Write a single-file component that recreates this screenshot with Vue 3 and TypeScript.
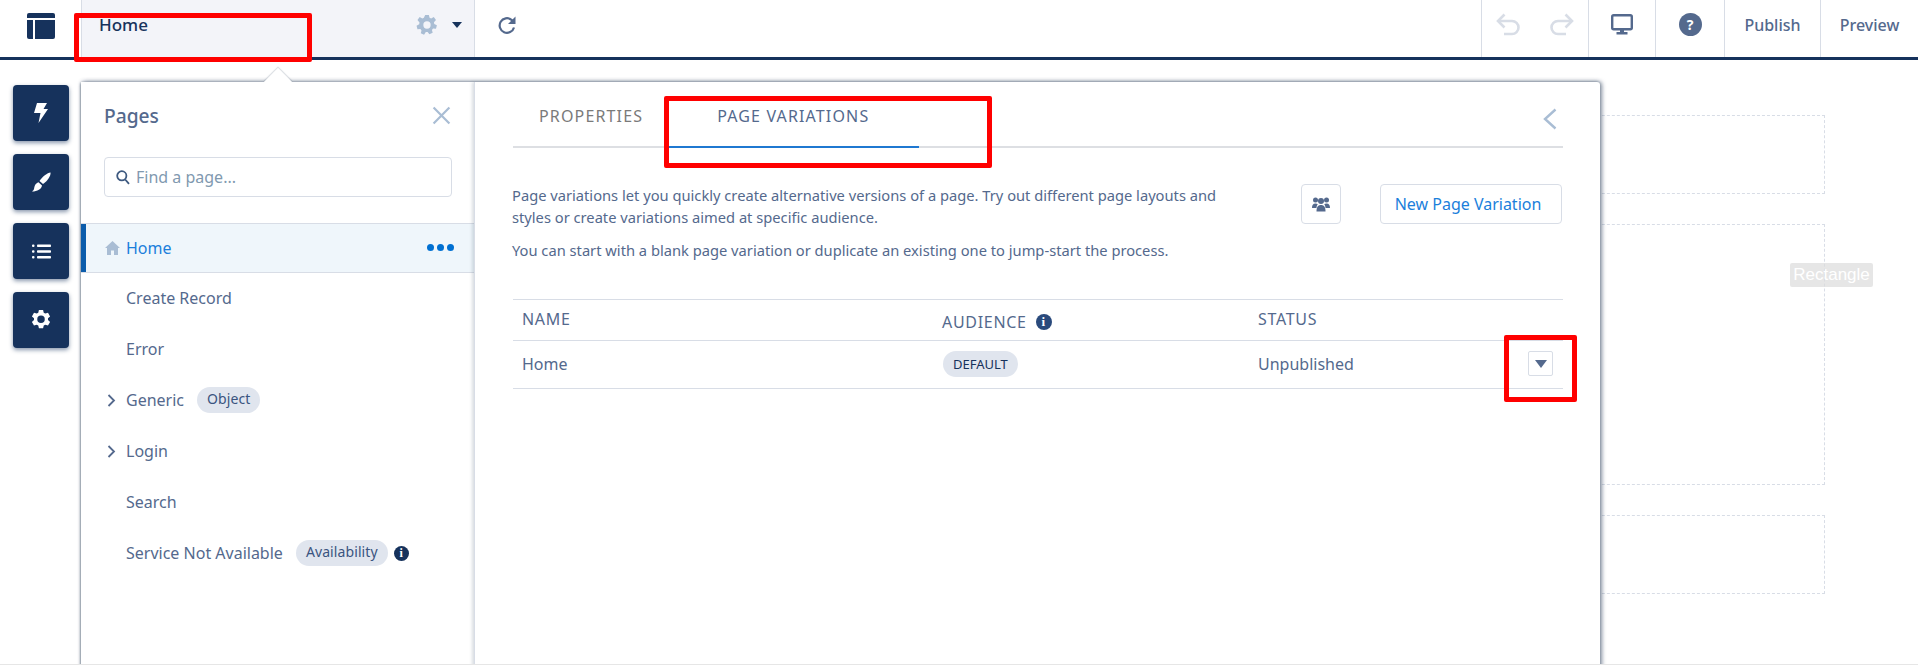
<script setup lang="ts">
interface PageRow { name: string; expandable?: boolean; badge?: string; info?: boolean }

const pages: PageRow[] = [
  { name: 'Create Record' },
  { name: 'Error' },
  { name: 'Generic', expandable: true, badge: 'Object' },
  { name: 'Login', expandable: true },
  { name: 'Search' },
  { name: 'Service Not Available', badge: 'Availability', info: true }
]
</script>

<template>
  <div class="root">
    <header class="topbar">
      <div class="logo-cell">
        <svg width="28" height="26" viewBox="0 0 28 26" fill="#16325c">
          <path d="M2 0h24a2 2 0 0 1 2 2v3H0V2a2 2 0 0 1 2-2z" />
          <path d="M0 7h6v19H2a2 2 0 0 1-2-2z" />
          <path d="M8 7h20v17a2 2 0 0 1-2 2H8z" />
        </svg>
      </div>
      <div class="home-tab">
        <span class="home-title">Home</span>
        <svg class="tab-gear" width="22" height="22" viewBox="0 0 24 24">
          <path fill="#a9bdd4" fill-rule="evenodd" d="M10 1h4l.8 3.100 1.700.8 2.900-1.600 2.400 3.300-2.200 2.300.3 1.900 2.900 1.400-1 3.900-3.200-.2-1.200 1.500.8 3.100-3.600 1.700-1.900-2.600h-2L8.800 22.700 5.200 21l.8-3.100-1.200-1.500-3.200.2-1-3.900 2.900-1.400.3-1.900L1.600 6.600 4 3.300l2.900 1.600 1.700-.8zM12 8a4 4 0 1 0 0 8 4 4 0 0 0 0-8z" />
        </svg>
        <svg class="tab-caret" width="10" height="6" viewBox="0 0 12 7"><path fill="#16325c" d="M0 0h12L6 7z" /></svg>
      </div>
      <div class="refresh-cell">
        <svg width="20" height="20" viewBox="0 0 20 20" fill="none" stroke="#54698d" stroke-width="2.200">
          <path d="M17 12.500A7.300 7.300 0 1 1 14.500 4.800L16.500 7" />
          <path d="M18.500 1.500v7.500H11z" fill="#54698d" stroke="none" />
        </svg>
      </div>
      <div class="spacer"></div>
      <div class="action-cell history">
        <svg width="25" height="23" viewBox="0 0 25 23" fill="none" stroke="#d8dde6" stroke-width="2.600">
          <path d="M8.500 1.500 2 8l6.500 6.500" />
          <path d="M2.500 8H16a6.500 6.500 0 0 1 0 13H8" />
        </svg>
        <svg width="25" height="23" viewBox="0 0 25 23" fill="none" stroke="#d8dde6" stroke-width="2.600">
          <path d="M16.500 1.500 23 8l-6.500 6.500" />
          <path d="M22.500 8H9a6.500 6.500 0 0 0 0 13h8" />
        </svg>
      </div>
      <div class="action-cell device">
        <svg width="22" height="22" viewBox="0 0 22 22">
          <rect x="1.200" y="1.200" width="19.600" height="14" rx="1.500" fill="none" stroke="#54698d" stroke-width="2.400" />
          <path fill="#54698d" d="M9 16h4v2h3.500v2.500h-11V18H9z" />
        </svg>
      </div>
      <div class="action-cell help">
        <span class="help-circle">?</span>
      </div>
      <div class="action-cell text publish">Publish</div>
      <div class="action-cell text preview">Preview</div>
    </header>

    <div class="stage">
      <nav class="rail">
        <button class="rail-btn">
          <svg width="14" height="20" viewBox="0 0 14 20" fill="#fff"><path d="M3 0h10L9.500 6H14L4.500 20l2-10H0z" /></svg>
        </button>
        <button class="rail-btn">
          <svg width="19" height="20" viewBox="0 0 19 20" fill="#fff"><path d="M18.500.5c.6 2.500-2.500 8-7.500 11.500L7.500 9C10 5 15.500.5 18.500.5z" /><path d="M6.500 10.200 10 13.500c-.5 3.500-4.500 6-10 6 2.800-1.800 1.800-3.800 3-6.300.7-1.500 2-2.500 3.500-3z" /></svg>
        </button>
        <button class="rail-btn">
          <svg width="19" height="15" viewBox="0 0 19 15" fill="#fff">
            <rect x="0" y="0.500" width="2.500" height="2.500" rx="1" /><rect x="5" y="0.500" width="14" height="2.500" rx=".8" />
            <rect x="0" y="6.200" width="2.500" height="2.500" rx="1" /><rect x="5" y="6.200" width="14" height="2.500" rx=".8" />
            <rect x="0" y="12" width="2.500" height="2.500" rx="1" /><rect x="5" y="12" width="14" height="2.500" rx=".8" />
          </svg>
        </button>
        <button class="rail-btn">
          <svg width="20" height="20" viewBox="0 0 24 24"><path fill="#fff" fill-rule="evenodd" d="M9.500 0h5l.8 3.300 1.800 1 3.300-1 2.500 4.400-2.500 2.300v2l2.500 2.300-2.500 4.400-3.300-1-1.800 1-.8 3.300h-5l-.8-3.300-1.800-1-3.300 1L1.100 14.300 3.600 12v-2L1.100 7.700l2.500-4.400 3.300 1 1.800-1zM12 6.500a4.500 4.500 0 1 0 0 9 4.500 4.500 0 0 0 0-9z" /></svg>
        </button>
      </nav>

      <div class="canvas">
        <div class="region r1"></div>
        <div class="region r2"><span class="region-label">Rectangle</span></div>
        <div class="region r3"></div>
      </div>

      <section class="popover">
        <span class="nub"></span>
        <aside class="pages">
          <div class="pages-head">
            <h2>Pages</h2>
            <svg width="19" height="19" viewBox="0 0 18 18" stroke="#a9bdd4" stroke-width="2.100"><path d="M1.500 1.500l15 15M16.500 1.500l-15 15" /></svg>
          </div>
          <div class="search">
            <svg width="14" height="15" viewBox="0 0 14 15" fill="none" stroke="#3e5a80" stroke-width="1.800"><circle cx="5.800" cy="5.800" r="4.600" /><path d="M9.200 9.500 13 13.800" /></svg>
            <span>Find a page...</span>
          </div>
          <div class="page-row selected">
            <svg class="house" width="15" height="14" viewBox="0 0 15 14" fill="#a9bdd4"><path d="M7.500 0 15 7h-2v7H9V9.500H6V14H2V7H0z" /></svg>
            <span class="page-name">Home</span>
            <span class="dots"><i></i><i></i><i></i></span>
          </div>
          <div v-for="page in pages" :key="page.name" class="page-row">
            <svg v-if="page.expandable" class="chev" width="9" height="13" viewBox="0 0 9 13" fill="none" stroke="#54698d" stroke-width="1.800"><path d="M1.500 1 7 6.500 1.500 12" /></svg>
            <span class="page-name">{{ page.name }}</span>
            <span v-if="page.badge" class="badge">{{ page.badge }}</span>
            <span v-if="page.info" class="info dark">i</span>
          </div>
        </aside>

        <div class="details">
          <div class="tabs">
            <span class="tab">PROPERTIES</span>
            <span class="tab active">PAGE VARIATIONS</span>
            <svg class="back" width="14" height="22" viewBox="0 0 14 22" fill="none" stroke="#a9bdd4" stroke-width="2.400"><path d="M12.500 1.500 2 11l10.500 9.500" /></svg>
          </div>
          <div class="intro">
            <div class="intro-text">
              <p>Page variations let you quickly create alternative versions of a page. Try out different page layouts and styles or create variations aimed at specific audience.</p>
              <p>You can start with a blank page variation or duplicate an existing one to jump-start the process.</p>
            </div>
            <button class="icon-btn">
              <svg width="18" height="16" viewBox="0 0 18 16" fill="#54698d">
                <circle cx="3.500" cy="4" r="2.500" /><circle cx="14.500" cy="4" r="2.500" />
                <path d="M0 12c0-3 1-4.500 3.500-4.500 1 0 1.700.2 2.300.7C5 9.300 4.500 10.500 4.500 12z" />
                <path d="M18 12c0-3-1-4.500-3.500-4.500-1 0-1.700.2-2.300.7.800 1.100 1.300 2.300 1.300 3.800z" />
                <circle cx="9" cy="5" r="3" />
                <path d="M4.500 15.500c0-4.500 1.500-6.500 4.500-6.500s4.500 2 4.500 6.500z" />
              </svg>
            </button>
            <button class="new-btn">New Page Variation</button>
          </div>
          <div class="table">
            <div class="table-row head">
              <span class="col-name">NAME</span>
              <span class="col-aud">AUDIENCE <span class="info navy">i</span></span>
              <span class="col-status">STATUS</span>
              <span></span>
            </div>
            <div class="table-row body">
              <span class="col-name">Home</span>
              <span><span class="default-pill">DEFAULT</span></span>
              <span>Unpublished</span>
              <button class="menu-btn"><svg width="12" height="8" viewBox="0 0 12 8"><path fill="#54698d" d="M0 0h12L6 8z" /></svg></button>
            </div>
          </div>
        </div>
      </section>
    </div>

    <div class="mark m-home"></div>
    <div class="mark m-tab"></div>
    <div class="mark m-menu"></div>
  </div>
</template>

<style>
html, body { margin: 0; background: #fff; }
</style>

<style scoped>
.root {
  position: relative;
  width: 1918px;
  height: 665px;
  box-sizing: border-box;
  overflow: hidden;
  background: #fff;
  border-bottom: 1px solid #e6e6e6;
  font-family: "Noto Sans", "Open Sans", sans-serif;
  color: #54698d;
}
.topbar {
  display: flex;
  height: 60px;
  box-sizing: border-box;
  border-bottom: 3px solid #16325c;
  background: #fff;
}
.logo-cell {
  width: 81px;
  display: flex;
  justify-content: center;
  align-items: center;
  padding-bottom: 6px;
  box-sizing: border-box;
}
.home-tab {
  width: 394px;
  box-sizing: border-box;
  display: flex;
  align-items: center;
  padding: 0 0 8px 17px;
  background: #f3f4f9;
  border-left: 1px solid #d8dde6;
  border-right: 1px solid #d8dde6;
}
.home-title { font-size: 17px; color: #16325c; font-weight: 500; }
.tab-gear { margin-left: auto; }
.tab-caret { margin: 0 12px 0 14px; }
.refresh-cell {
  width: 64px;
  display: flex;
  justify-content: center;
  align-items: center;
  padding-bottom: 8px;
  box-sizing: border-box;
}
.spacer { flex: 1; }
.action-cell {
  display: flex;
  align-items: center;
  justify-content: center;
  box-sizing: border-box;
  border-left: 1px solid #d8dde6;
  padding-bottom: 8px;
}
.history { width: 107px; gap: 28px; }
.device { width: 67px; }
.help { width: 69px; }
.publish { width: 96px; }
.preview { width: 98px; }
.help-circle {
  width: 23px;
  height: 23px;
  border-radius: 50%;
  background: #54698d;
  color: #fff;
  font-size: 14px;
  font-weight: 700;
  display: flex;
  align-items: center;
  justify-content: center;
}
.text { font-size: 16px; font-weight: 500; color: #54698d; }

.stage { position: relative; display: flex; height: 604px; }
.rail {
  width: 81px;
  box-sizing: border-box;
  flex: none;
  padding: 25px 0 0 13px;
  display: flex;
  flex-direction: column;
  gap: 13px;
}
.rail-btn {
  width: 56px;
  height: 56px;
  border: 0;
  padding: 0;
  border-radius: 4px;
  background: #16325c;
  box-shadow: 0 2px 4px rgba(22, 50, 92, 0.5);
  display: flex;
  align-items: center;
  justify-content: center;
}
.canvas {
  flex: 1;
  padding: 55px 93px 0 300px;
  display: flex;
  flex-direction: column;
}
.region {
  border: 1px dashed #d8dde6;
  box-sizing: border-box;
  position: relative;
}
.r1 { height: 79px; margin-bottom: 30px; }
.r2 { height: 261px; margin-bottom: 30px; }
.r3 { height: 79px; }
.region-label {
  position: absolute;
  top: 38px;
  right: -49px;
  width: 83px;
  height: 24px;
  background: rgba(220, 220, 220, 0.7);
  border-radius: 2px;
  color: #fff;
  font: 17px/24px "Liberation Sans", sans-serif;
  text-align: center;
}

.popover {
  position: absolute;
  left: 81px;
  top: 22px;
  width: 1519px;
  height: 590px;
  display: flex;
  background: #fff;
  border-radius: 3px 3px 0 0;
  box-shadow: 2px 0 4px rgba(50, 70, 95, 0.55), 0 -1px 4px rgba(50, 70, 95, 0.22), -1px 0 2px rgba(50, 70, 95, 0.45);
}
.nub {
  position: absolute;
  left: 187px;
  top: -10px;
  width: 20px;
  height: 20px;
  background: #fff;
  transform: rotate(45deg);
  box-shadow: -1px -1px 1px rgba(50, 70, 95, 0.2);
}
.pages {
  position: relative;
  width: 393px;
  flex: none;
  background: #fff;
}
.pages-head {
  height: 75px;
  box-sizing: border-box;
  padding: 0 23px 9px 23px;
  display: flex;
  align-items: center;
  justify-content: space-between;
}
.pages-head h2 { margin: 0; font-size: 19.200px; font-weight: 500; color: #54698d; }
.pages-head svg { margin-top: 1px; }
.search {
  margin: 0 22px 0 23px;
  height: 40px;
  box-sizing: border-box;
  border: 1px solid #d8dde6;
  border-radius: 4px;
  display: flex;
  align-items: center;
  gap: 6px;
  padding-left: 11px;
  font-size: 16px;
  color: #8199af;
}
.page-row {
  height: 51px;
  box-sizing: border-box;
  padding: 0 0 1px 45px;
  position: relative;
  display: flex;
  align-items: center;
  font-size: 16px;
  color: #54698d;
}
.page-row .page-name { white-space: nowrap; }
.selected {
  margin-top: 26px;
  height: 50px;
  background: #eff6fb;
  border-top: 1px solid #d8dde6;
  border-bottom: 1px solid #d8dde6;
  color: #1b7fdb;
}
.selected::before {
  content: "";
  position: absolute;
  left: 0;
  top: 0;
  bottom: 0;
  width: 5px;
  background: #0b5cab;
}
.house { position: absolute; left: 24px; top: 17px; }
.chev { position: absolute; left: 26px; top: 19px; }
.dots { margin-left: auto; margin-right: 20px; display: flex; gap: 3px; }
.dots i { width: 7px; height: 7px; border-radius: 50%; background: #0070d2; }
.badge {
  margin-left: 13px;
  height: 26px;
  padding: 0 10px;
  border-radius: 13px;
  background: #e0e5ee;
  color: #3a5480;
  font-size: 14px;
  letter-spacing: 0.1px;
  line-height: 24px;
}
.info {
  display: inline-flex;
  align-items: center;
  justify-content: center;
  border-radius: 50%;
  color: #fff;
  font-weight: 700;
  font-family: "Liberation Serif", serif;
}
.info.dark { width: 15px; height: 15px; margin-left: 6px; background: #16325c; font-size: 12px; }
.info.navy { width: 16px; height: 16px; margin-left: 9px; background: #2a4a7c; font-size: 13px; }

.details {
  flex: 1;
  padding: 0 37px 0 38px;
  box-shadow: -2px 0 3px rgba(50, 70, 95, 0.18);
  border-left: 1px solid #d8dde6;
  position: relative;
  box-sizing: border-box;
}
.tabs {
  height: 66px;
  box-sizing: border-box;
  border-bottom: 2px solid #dddfe3;
  display: flex;
  align-items: flex-start;
  position: relative;
}
.tab {
  box-sizing: border-box;
  height: 66px;
  padding: 24px 26px 0;
  font-size: 16px;
  line-height: 20px;
  letter-spacing: 1.150px;
  color: #7a7a7a;
  white-space: nowrap;
}
.tab.active {
  width: 250px;
  padding-left: 48px;
  color: #54698d;
  border-bottom: 2px solid #1f78d1;
}
.back { margin: 26px 6px 0 auto; }
.intro { display: flex; align-items: flex-start; margin-top: 36px; }
.intro-text { width: 735px; margin-left: -1px; font-size: 14.700px; line-height: 22px; color: #54698d; }
.intro-text p { margin: 0 0 11px; }
.icon-btn, .new-btn, .menu-btn {
  background: #fff;
  border: 1px solid #d8dde6;
  border-radius: 4px;
  box-sizing: border-box;
  display: flex;
  align-items: center;
  justify-content: center;
  padding: 0;
}
.icon-btn { width: 40px; height: 40px; margin-left: auto; }
.new-btn {
  width: 182px;
  height: 40px;
  margin: 0 1px 0 39px;
  padding-right: 6px;
  font: inherit;
  font-size: 16px;
  color: #1b7fdb;
}
.table { margin-top: 27px; border-top: 1px solid #d8dde6; }
.table-row {
  display: grid;
  grid-template-columns: 430px 315px 1fr 25px;
  align-items: center;
  box-sizing: border-box;
  border-bottom: 1px solid #d8dde6;
  padding-right: 10px;
  font-size: 16px;
  color: #54698d;
}
.table-row.head { height: 41px; letter-spacing: 0.7px; padding-bottom: 3px; }
.table-row.body { height: 48px; padding-bottom: 2px; }
.col-name { padding-left: 9px; }
.col-aud { display: inline-flex; align-items: center; margin-top: 6px; margin-left: -1px; }
.default-pill {
  display: inline-block;
  height: 26px;
  line-height: 26px;
  padding: 0 10px;
  border-radius: 13px;
  background: #e0e5ee;
  color: #16325c;
  font-size: 13px;
}
.menu-btn { width: 25px; height: 25px; border-radius: 2px; }

.mark {
  position: absolute;
  border: 5px solid #f00;
  border-radius: 2px;
  box-sizing: border-box;
  pointer-events: none;
}
.m-home { left: 74px; top: 13px; width: 238px; height: 49px; }
.m-tab { left: 664px; top: 96px; width: 328px; height: 72px; }
.m-menu { left: 1504px; top: 335px; width: 73px; height: 67px; }
</style>
